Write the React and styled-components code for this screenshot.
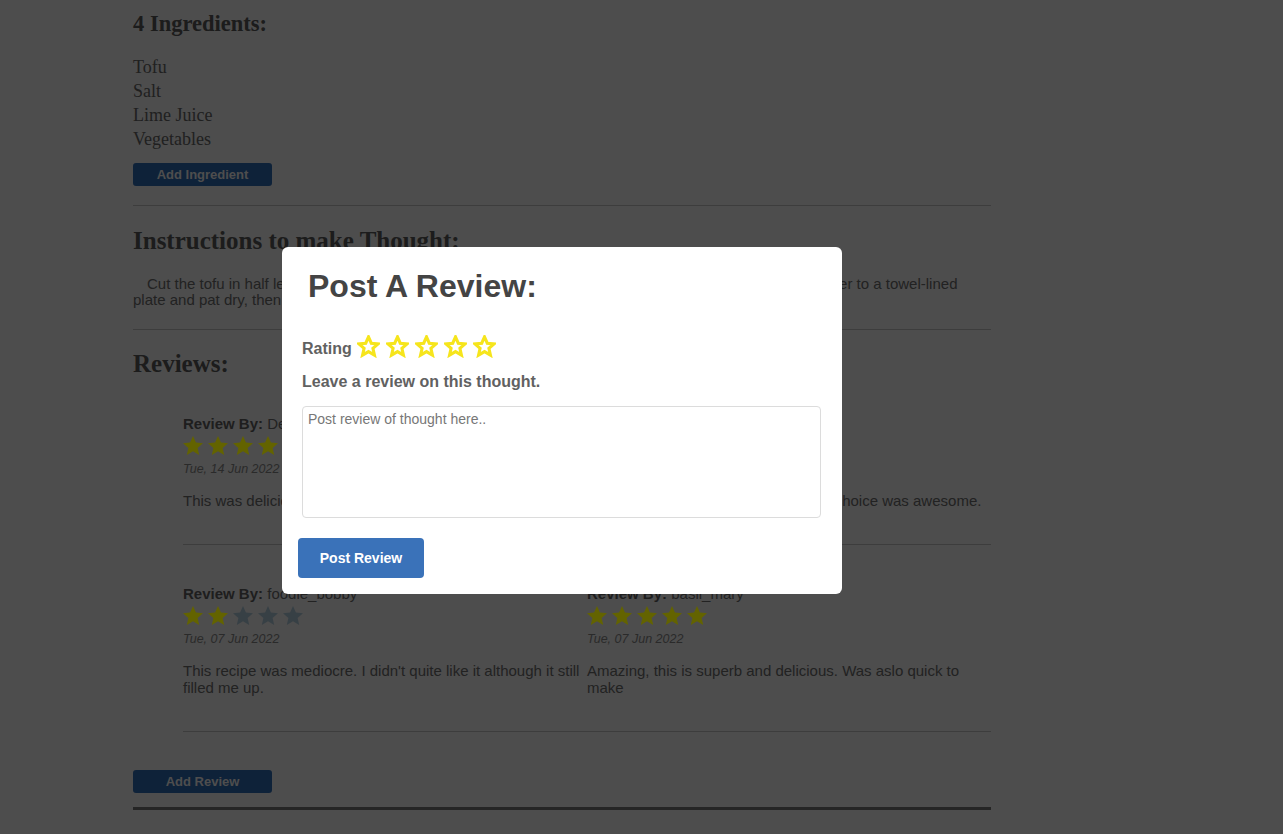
import React from 'react';
import styled, { createGlobalStyle } from 'styled-components';

const STAR_POINTS = '12,2 14.9,8.6 22,9.3 16.6,14 18.2,21 12,17.3 5.8,21 7.4,14 2,9.3 9.1,8.6';

const ingredients = ['Tofu', 'Salt', 'Lime Juice', 'Vegetables'];

const reviewRows = [
  [
    { author: 'DelishDan', rating: 5, date: 'Tue, 14 Jun 2022', text: 'This was delicious, will make again.' },
    { author: 'greens_gal', rating: 4, date: 'Mon, 13 Jun 2022', text: 'Loved the lime juice, and that veggie choice was awesome.' },
  ],
  [
    { author: 'foodie_bobby', rating: 2, date: 'Tue, 07 Jun 2022', text: "This recipe was mediocre. I didn't quite like it although it still filled me up." },
    { author: 'basil_mary', rating: 5, date: 'Tue, 07 Jun 2022', text: 'Amazing, this is superb and delicious. Was aslo quick to make' },
  ],
];

const Star = ({ filled }) => (
  <StarSvg width="24" height="24" viewBox="0 0 24 24" $filled={filled}>
    <polygon points={STAR_POINTS} />
  </StarSvg>
);

const OutlineStar = () => (
  <RatingStarSvg width="23" height="23" viewBox="0 0 24 24">
    <polygon points={STAR_POINTS} />
  </RatingStarSvg>
);

const App = () => {
  return (
    <>
      <GlobalStyle />
      <Page>
        <SectionTitle $size={22.5}>4 Ingredients:</SectionTitle>
        <IngredientList>
          {ingredients.map((item) => (
            <li key={item}>{item}</li>
          ))}
        </IngredientList>
        <SmallButton $top={12}>Add Ingredient</SmallButton>
        <Divider $top={19} $bottom={21} />

        <SectionTitle>Instructions to make Thought:</SectionTitle>
        <Instructions>
          Cut the tofu in half lengthwise, then cut each half into cubes and press gently to remove the water, transfer to a towel-lined
          plate and pat dry, then fry until golden with the salt and lime juice.
        </Instructions>
        <Divider $top={21} $bottom={20} />

        <SectionTitle>Reviews:</SectionTitle>
        <ReviewList>
          {reviewRows.map((row, i) => (
            <React.Fragment key={i}>
              <ReviewRow>
                {row.map((review) => (
                  <ReviewCard key={review.author}>
                    <ReviewAuthor>
                      <strong>Review By:</strong> {review.author}
                    </ReviewAuthor>
                    <StarRow>
                      {[1, 2, 3, 4, 5].map((n) => (
                        <Star key={n} filled={n <= review.rating} />
                      ))}
                    </StarRow>
                    <ReviewDate>{review.date}</ReviewDate>
                    <ReviewText>{review.text}</ReviewText>
                  </ReviewCard>
                ))}
              </ReviewRow>
              <Divider $top={35} $bottom={i === reviewRows.length - 1 ? 38 : 41} />
            </React.Fragment>
          ))}
        </ReviewList>
        <SmallButton>Add Review</SmallButton>
        <ThickRule />
      </Page>

      <Backdrop />
      <Modal>
        <ModalTitle>Post A Review:</ModalTitle>
        <FormBody>
          <RatingRow>
            <FieldLabel>Rating</FieldLabel>
            <RatingStars>
              {[1, 2, 3, 4, 5].map((n) => (
                <OutlineStar key={n} />
              ))}
            </RatingStars>
          </RatingRow>
          <PromptLabel>Leave a review on this thought.</PromptLabel>
          <ReviewInput placeholder="Post review of thought here.." />
        </FormBody>
        <PostButton type="button">Post Review</PostButton>
      </Modal>
    </>
  );
};

export default App;

const GlobalStyle = createGlobalStyle`
  html, body {
    margin: 0;
    padding: 0;
  }
  body {
    background: #c0c0c0;
    font-family: "Liberation Serif", "Times New Roman", serif;
    overflow: hidden;
  }
`;

const Page = styled.main`
  width: 858px;
  margin-left: 133px;
  padding-top: 10px;
`;

const SectionTitle = styled.h2`
  margin: 0;
  font-size: ${(p) => p.$size || 25}px;
  line-height: 28px;
  font-weight: bold;
  color: #464646;
`;

const IngredientList = styled.ul`
  list-style: none;
  margin: 17px 0 0;
  padding: 0;

  li {
    font-size: 18px;
    line-height: 24px;
    color: #505050;
  }
`;

const SmallButton = styled.button`
  display: block;
  width: 139px;
  height: 23px;
  margin-top: ${(p) => p.$top || 0}px;
  padding: 0;
  border: none;
  border-radius: 3px;
  background: #25558e;
  color: #c2c2c2;
  font-family: "Liberation Sans", Arial, sans-serif;
  font-size: 13px;
  font-weight: bold;
`;

const Divider = styled.hr`
  border: 0;
  border-top: 1px solid #989898;
  margin: ${(p) => p.$top}px 0 ${(p) => p.$bottom}px;
`;

const ThickRule = styled.div`
  height: 3px;
  margin-top: 14px;
  background: #5c5c5c;
`;

const Instructions = styled.p`
  margin: 21px 0 0;
  text-indent: 14px;
  font-family: "Liberation Sans", Arial, sans-serif;
  font-size: 15px;
  line-height: 16px;
  color: #555;
`;

const ReviewList = styled.section`
  margin-top: 38px;
  padding-left: 50px;
`;

const ReviewRow = styled.div`
  display: grid;
  grid-template-columns: 1fr 1fr;
  font-family: "Liberation Sans", Arial, sans-serif;
`;

const ReviewCard = styled.article`
  display: flex;
  flex-direction: column;
`;

const ReviewAuthor = styled.div`
  font-size: 15px;
  line-height: 16px;
  color: #555;

  strong {
    color: #4c4c4c;
  }
`;

const StarRow = styled.div`
  display: flex;
  gap: 1px;
  margin-top: 2px;
  height: 24px;
  margin-left: -2px;
  align-items: center;
`;

const StarSvg = styled.svg`
  polygon {
    fill: ${(p) => (p.$filled ? '#f8f800' : '#8aa0ad')};
  }
`;

const ReviewDate = styled.div`
  margin-top: 4px;
  font-size: 12.5px;
  line-height: 14px;
  font-style: italic;
  color: #6a6a6a;
`;

const ReviewText = styled.p`
  margin: 16px 0 0;
  font-size: 15px;
  line-height: 17px;
  color: #555;
`;

const Backdrop = styled.div`
  position: fixed;
  inset: 0;
  background: rgba(0, 0, 0, 0.6);
`;

const Modal = styled.div`
  position: fixed;
  top: 247px;
  left: 282px;
  width: 560px;
  height: 347px;
  box-sizing: border-box;
  padding: 21px 21px 16px 16px;
  display: flex;
  flex-direction: column;
  background: #fff;
  border-radius: 6px;
  font-family: "Liberation Sans", Arial, sans-serif;
`;

const ModalTitle = styled.h2`
  margin: 0 0 0 10px;
  font-size: 32px;
  line-height: 37px;
  font-weight: bold;
  color: #444;
`;

const FormBody = styled.div`
  display: flex;
  flex-direction: column;
  margin-left: 4px;
`;

const RatingRow = styled.div`
  display: flex;
  align-items: center;
  gap: 5px;
  margin-top: 29px;
  height: 24px;
`;

const FieldLabel = styled.span`
  font-size: 16px;
  font-weight: bold;
  color: #616161;
  padding-top: 5px;
`;

const RatingStars = styled.div`
  display: flex;
  gap: 6px;
`;

const RatingStarSvg = styled.svg`
  polygon {
    fill: #fff;
    stroke: #f6e51c;
    stroke-width: 3.2;
    stroke-linejoin: miter;
  }
`;

const PromptLabel = styled.div`
  margin-top: 15px;
  font-size: 16px;
  line-height: 18px;
  font-weight: bold;
  color: #616161;
`;

const ReviewInput = styled.textarea`
  margin-top: 15px;
  height: 112px;
  box-sizing: border-box;
  padding: 4px 5px;
  border: 1px solid #dcdcdc;
  border-radius: 4px;
  resize: none;
  font-family: "Liberation Sans", Arial, sans-serif;
  font-size: 14px;
  line-height: 16px;

  &::placeholder {
    color: #777;
  }
`;

const PostButton = styled.button`
  margin-top: 20px;
  width: 126px;
  height: 40px;
  border: none;
  border-radius: 4px;
  background: #3a72b9;
  color: #fff;
  font-family: "Liberation Sans", Arial, sans-serif;
  font-size: 14px;
  font-weight: bold;
`;
